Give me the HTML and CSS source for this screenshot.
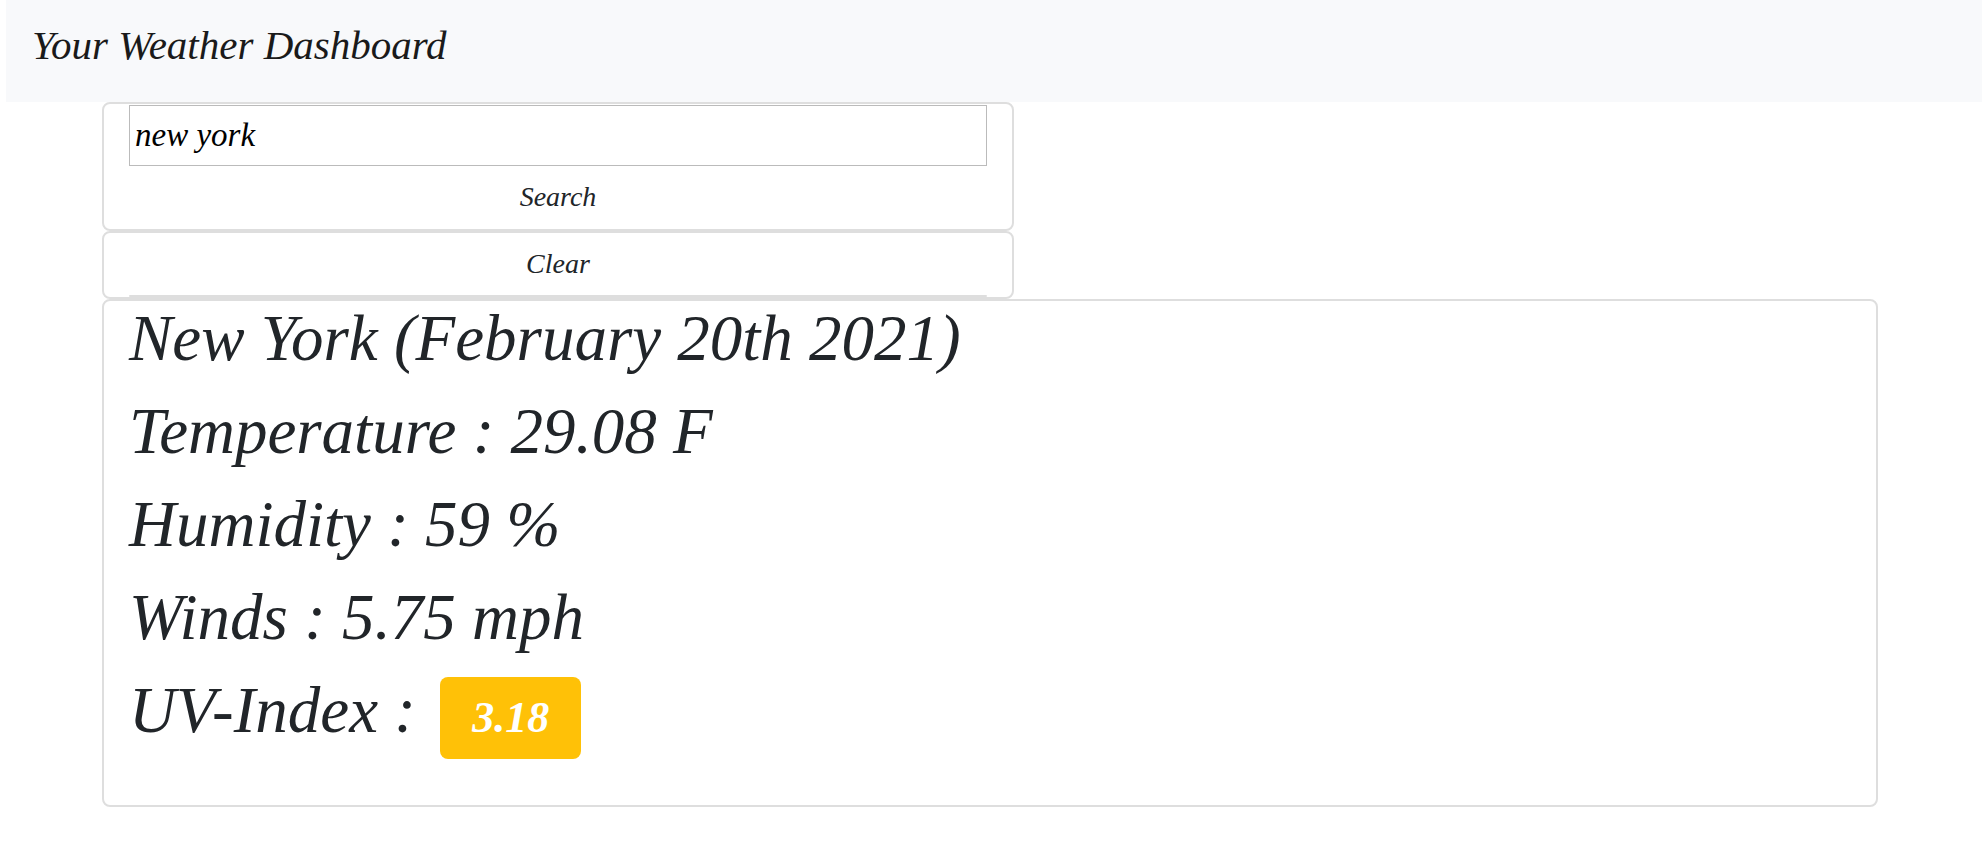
FILE: index.html
```html
<!DOCTYPE html>
<html lang="en">
<head>
<meta charset="utf-8">
<meta name="viewport" content="width=device-width, initial-scale=1">
<title>Your Weather Dashboard</title>
<link rel="stylesheet" href="styles.css">
</head>
<body>
<header class="navbar"><h1 class="brand">Your Weather Dashboard</h1></header>
<main class="dashboard">
  <form class="controls">
    <div class="card search-card">
      <input class="city-input" type="text" aria-label="City" value="new york">
      <button class="btn" type="button">Search</button>
    </div>
    <div class="card clear-card">
      <button class="btn" type="button">Clear</button>
      <div class="history"></div>
    </div>
  </form>
  <section class="card weather">
    <h2 class="reading">New York (February 20th 2021)</h2>
    <p class="reading">Temperature : 29.08 F</p>
    <p class="reading">Humidity : 59 %</p>
    <p class="reading">Winds : 5.75 mph</p>
    <p class="reading">UV-Index : <span class="badge">3.18</span></p>
  </section>
</main>
</body>
</html>
```

FILE: styles.css
```css
* {
  box-sizing: border-box;
}

body {
  margin: 0;
  background: #fff;
  color: #212529;
  font-family: "Monotype Corsiva", "Apple Chancery", "Liberation Serif", serif;
  font-style: italic;
}

.navbar {
  margin-left: 6px;
  padding: 15px 26px 27px;
  background: #f8f9fb;
}

.brand {
  margin: 0;
  color: #1a1a1a;
  font-size: 41px;
  font-weight: 400;
  line-height: 60px;
}

.dashboard {
  margin: 0 104px 0 102px;
}

.controls {
  width: calc(50% + 24px);
}

.card {
  border: 2px solid #dedede;
  border-radius: 8px;
  padding: 0 25px;
}

.search-card {
  padding-top: 1px;
  padding-bottom: 1px;
}

.city-input {
  display: block;
  width: 100%;
  height: 61px;
  padding: 0 5px;
  border: 1px solid #bbb;
  background: #fff;
  color: #000;
  font: inherit;
  font-size: 33px;
}

.btn {
  display: block;
  width: 100%;
  height: 62px;
  padding: 0;
  border: 0;
  background: transparent;
  color: #212529;
  font: inherit;
  font-size: 28px;
}

.history {
  border-top: 2px solid #dedede;
  border-radius: 2px;
}

.weather {
  padding-bottom: 27px;
}

.reading {
  margin: 0 0 19px;
  font-size: 65px;
  font-weight: 400;
  line-height: 74px;
}

.badge {
  display: inline-block;
  margin-left: 8px;
  padding: 0 32px;
  border-radius: 8px;
  background: #ffc107;
  color: #fff;
  font-size: 44px;
  font-weight: 700;
  line-height: 82px;
}
```
